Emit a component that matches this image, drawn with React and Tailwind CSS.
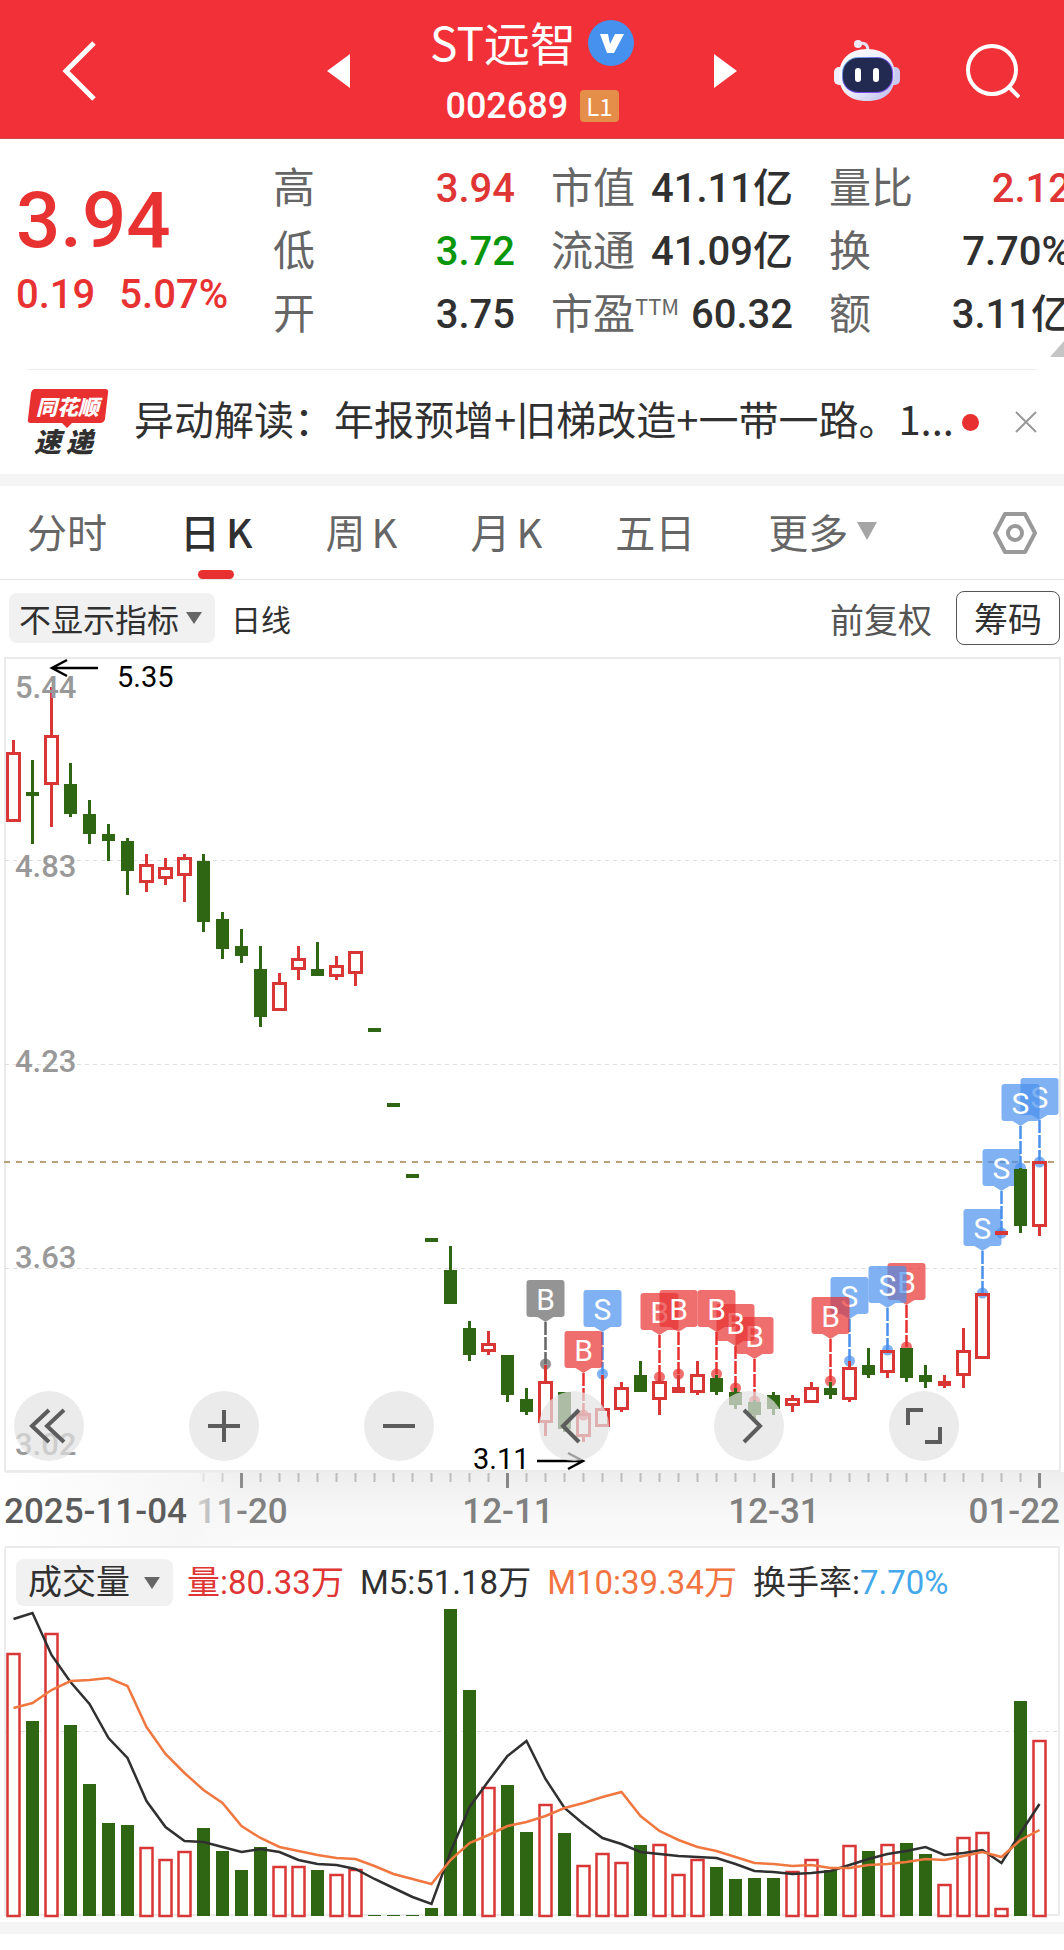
// src/pages/StockDetail.jsx
import { useState } from 'react';

const UP = '#d93636';
const DOWN = '#2f6614';

// candle spacing is shared by the price chart, the date axis and the volume chart
const STEP = 19;
const xAt = (i) => 13.5 + STEP * i;

// [direction, high, body top, body bottom, low] in canvas units
const CANDLES = [
  ['up', 740, 752, 822, 822], ['down', 760, 792, 796, 844], ['up', 687, 735, 785, 827],
  ['down', 763, 784, 814, 817], ['down', 800, 814, 834, 844], ['down', 824, 834, 841, 861],
  ['down', 838, 841, 871, 895], ['up', 854, 864, 883, 892], ['up', 858, 867, 879, 885],
  ['up', 854, 857, 876, 902], ['down', 854, 861, 922, 932], ['down', 912, 919, 949, 959],
  ['down', 929, 946, 956, 963], ['down', 946, 969, 1017, 1027], ['up', 973, 982, 1011, 1011],
  ['up', 946, 958, 970, 980], ['down', 942, 969, 976, 976], ['up', 956, 965, 977, 980],
  ['up', 951, 951, 974, 986], ['down', 1028, 1028, 1032, 1032], ['down', 1103, 1103, 1107, 1107],
  ['down', 1174, 1174, 1178, 1178], ['down', 1238, 1238, 1242, 1242], ['down', 1246, 1270, 1304, 1304],
  ['down', 1321, 1328, 1355, 1361], ['up', 1331, 1343, 1352, 1355], ['down', 1355, 1355, 1395, 1402],
  ['down', 1388, 1399, 1412, 1415], ['up', 1365, 1381, 1423, 1436], ['down', 1392, 1392, 1429, 1432],
  ['up', 1413, 1413, 1437, 1442], ['up', 1375, 1408, 1427, 1427], ['up', 1382, 1387, 1410, 1412],
  ['down', 1361, 1375, 1392, 1392], ['up', 1377, 1381, 1400, 1415], ['up', 1375, 1387, 1393, 1393],
  ['up', 1361, 1374, 1393, 1395], ['down', 1375, 1378, 1392, 1395], ['down', 1388, 1392, 1405, 1409],
  ['down', 1400, 1402, 1415, 1420], ['down', 1392, 1395, 1409, 1415], ['up', 1395, 1398, 1406, 1412],
  ['up', 1382, 1387, 1403, 1403], ['down', 1382, 1388, 1395, 1399], ['up', 1361, 1367, 1400, 1402],
  ['down', 1348, 1365, 1375, 1378], ['up', 1350, 1350, 1373, 1378], ['down', 1348, 1348, 1378, 1382],
  ['down', 1365, 1375, 1382, 1388], ['up', 1375, 1381, 1386, 1388], ['up', 1328, 1350, 1376, 1388],
  ['up', 1293, 1293, 1359, 1359], ['up', 1231, 1231, 1235, 1235], ['down', 1168, 1169, 1226, 1233],
  ['up', 1161, 1161, 1227, 1236],
];

// trades: [candle index, letter, colour, top of the flag]
const RED = '#e83030';
const BLUE = '#4a90ec';
const TRADES = [
  [54, 'S', BLUE, 1078], [53, 'S', BLUE, 1084], [52, 'S', BLUE, 1149], [51, 'S', BLUE, 1209],
  [47, 'B', RED, 1263], [46, 'S', BLUE, 1266], [44, 'S', BLUE, 1277], [43, 'B', RED, 1297],
  [39, 'B', RED, 1317], [38, 'B', RED, 1304], [37, 'B', RED, 1290], [34, 'B', RED, 1293],
  [35, 'B', RED, 1290], [31, 'S', BLUE, 1290], [30, 'B', RED, 1331], [28, 'B', '#666666', 1280],
];

const VOLUME_TOPS = [
  1653, 1721, 1633, 1725, 1784, 1823, 1825, 1847, 1859, 1851, 1828, 1851, 1870, 1847, 1866, 1866,
  1870, 1874, 1869, 1915, 1915, 1915, 1908, 1609, 1690, 1787, 1785, 1832, 1804, 1833, 1865, 1853,
  1862, 1845, 1844, 1874, 1859, 1867, 1879, 1878, 1878, 1871, 1859, 1870, 1845, 1851, 1844, 1843,
  1854, 1884, 1837, 1832, 1908, 1701, 1740,
];

const MA5 = [
  1619, 1613, 1655, 1682, 1704, 1738, 1758, 1801, 1827, 1841, 1842, 1847, 1852, 1849, 1852, 1860,
  1864, 1865, 1869, 1879, 1888, 1897, 1904, 1852, 1807, 1781, 1756, 1741, 1779, 1808, 1824, 1838,
  1844, 1852, 1854, 1856, 1857, 1858, 1864, 1871, 1872, 1874, 1873, 1871, 1865, 1859, 1854, 1851,
  1847, 1855, 1853, 1850, 1863, 1833, 1804,
];

const MA10 = [
  1708, 1703, 1690, 1681, 1680, 1678, 1686, 1727, 1754, 1773, 1790, 1803, 1826, 1838, 1847, 1851,
  1855, 1858, 1859, 1866, 1874, 1879, 1884, 1860, 1843, 1835, 1826, 1822, 1816, 1808, 1803, 1797,
  1792, 1816, 1831, 1840, 1847, 1851, 1857, 1863, 1864, 1866, 1865, 1868, 1868, 1865, 1864, 1862,
  1859, 1860, 1856, 1852, 1857, 1840, 1830,
];

const STATS = [
  [
    { label: '高', value: '3.94', color: 'text-[#e03535]' },
    { label: '低', value: '3.72', color: 'text-[#0a960a]' },
    { label: '开', value: '3.75', color: 'text-[#303030]' },
  ],
  [
    { label: '市值', value: '41.11亿', color: 'text-[#303030]' },
    { label: '流通', value: '41.09亿', color: 'text-[#303030]' },
    { label: '市盈', sup: 'TTM', value: '60.32', color: 'text-[#303030]' },
  ],
  [
    { label: '量比', value: '2.12', color: 'text-[#e03535]' },
    { label: '换', value: '7.70%', color: 'text-[#303030]' },
    { label: '额', value: '3.11亿', color: 'text-[#303030]' },
  ],
];

const TABS = [['分时'], ['日', 'K'], ['周', 'K'], ['月', 'K'], ['五日']];

const Header = () => (
  <header className="grid h-[139px] grid-cols-[1fr_auto_1fr] items-center border-b border-[#c9484c] bg-[#f23037] pt-1 text-white">
    <button aria-label="返回" className="ml-[60px] w-10">
      <svg viewBox="0 0 40 64" className="w-10" fill="none" stroke="currentColor" strokeWidth="5">
        <path d="M34 4 L6 32 L34 60" />
      </svg>
    </button>

    <div className="flex w-[410px] items-center justify-between">
      <button aria-label="上一只">
        <svg viewBox="0 0 24 36" className="w-6" fill="currentColor">
          <path d="M23 1 L0 18 L23 35 Z" />
        </svg>
      </button>
      <div className="flex flex-col items-center gap-5">
        <div className="flex items-center gap-3">
          <h1 className="pb-1 text-[46px] leading-[46px]">ST远智</h1>
          <svg viewBox="0 0 46 46" className="w-[46px]">
            <circle cx="23" cy="23" r="23" fill="#4690ee" />
            <path d="M12 14 H20 L22 24 L27 14 H36 L26 33 H19 Z" fill="#fff" />
          </svg>
        </div>
        <div className="flex items-center gap-3">
          <span className="font-['Roboto',sans-serif] text-[36px] font-medium leading-9">002689</span>
          <span className="rounded bg-[#e48e49] px-[6px] text-[24px] leading-8">L1</span>
        </div>
      </div>
      <button aria-label="下一只">
        <svg viewBox="0 0 24 36" className="w-6" fill="currentColor">
          <path d="M1 1 L24 18 L1 35 Z" />
        </svg>
      </button>
    </div>

    <div className="mr-11 flex items-center justify-end gap-[66px]">
      <button aria-label="智能助手">
        <svg viewBox="0 0 66 62" className="w-[66px]">
          <defs>
            <linearGradient id="shell" x1="0" y1="0" x2="1" y2="1">
              <stop offset="0" stopColor="#ffffff" />
              <stop offset="0.5" stopColor="#eeeefb" />
              <stop offset="1" stopColor="#b9b9ec" />
            </linearGradient>
            <linearGradient id="visor" x1="0" y1="0" x2="1" y2="1">
              <stop offset="0" stopColor="#7fd8e8" />
              <stop offset="0.5" stopColor="#6a3fe0" />
              <stop offset="1" stopColor="#8a5cf0" />
            </linearGradient>
          </defs>
          <path d="M24 4 C30 2 34 4 34 11" fill="none" stroke="#e6e0f4" strokeWidth="3" />
          <circle cx="24" cy="4" r="4" fill="#efeafa" />
          <rect x="0" y="27" width="12" height="18" rx="5" fill="#f1effb" />
          <rect x="54" y="27" width="12" height="18" rx="5" fill="#c9c8f0" />
          <path d="M33 9 C52 9 61 21 61 35 C61 51 52 61 33 61 C14 61 5 51 5 35 C5 21 14 9 33 9 Z" fill="url(#shell)" />
          <rect x="8" y="17" width="51" height="36" rx="16" fill="url(#visor)" />
          <rect x="9" y="18" width="49" height="34" rx="15" fill="#232a52" />
          <rect x="21" y="28" width="6" height="14" rx="3" fill="#fff" />
          <rect x="39" y="28" width="6" height="14" rx="3" fill="#fff" />
        </svg>
      </button>
      <button aria-label="搜索">
        <svg viewBox="0 0 54 56" className="w-[54px]" fill="none" stroke="currentColor" strokeWidth="4">
          <circle cx="26" cy="27" r="24" />
          <path d="M42 43 L53 54" />
        </svg>
      </button>
    </div>
  </header>
);

const Quote = () => (
  <section className="relative flex h-[230px] overflow-hidden pt-[18px]">
    <div className="w-[273px] shrink-0 pl-4 pt-5 font-['Roboto',sans-serif] font-medium text-[#e83232]">
      <p className="text-[78px] leading-[88px]">3.94</p>
      <p className="flex gap-6 text-[40px] leading-[60px]">
        <span>0.19</span>
        <span>5.07%</span>
      </p>
    </div>
    <div className="flex gap-9">
      {STATS.map((column, i) => (
        <dl key={i} className="w-[242px] shrink-0">
          {column.map((item) => (
            <div key={item.label} className="flex h-[63px] items-center justify-between whitespace-nowrap">
              <dt className="flex pb-2 text-[42px] leading-[55px] text-[#666]">
                {item.label}
                {item.sup && <sup className="top-0 text-[22px] leading-[44px]">{item.sup}</sup>}
              </dt>
              <dd className={`font-['Roboto','Noto_Sans_CJK_SC',sans-serif] text-[40px] font-medium leading-[63px] ${item.color}`}>
                {item.value}
              </dd>
            </div>
          ))}
        </dl>
      ))}
    </div>
    <svg viewBox="0 0 14 16" className="absolute bottom-3 right-0 w-[14px]">
      <path d="M14 0 V16 H0 Z" fill="#c4c4c4" />
    </svg>
  </section>
);

const News = () => (
  <section className="mx-[27px] flex h-[105px] items-center border-t border-[#ececec]">
    <svg viewBox="0 0 82 66" className="w-[82px] shrink-0">
      <path d="M8 0 H78 Q82 0 81 4 L78 30 Q77 34 73 34 H45 L40 39 L35 34 H4 Q0 34 1 30 L4 4 Q5 0 8 0 Z" fill="#e83030" />
      <text x="9" y="26" fontSize="21" fontWeight="900" fontStyle="italic" fill="#fff">同花顺</text>
      <text x="7" y="63" fontSize="27" fontWeight="900" fontStyle="italic" fill="#303030">速</text>
      <text x="39" y="63" fontSize="27" fontWeight="900" fontStyle="italic" fill="#303030">递</text>
    </svg>
    <a href="#news" className="ml-[25px] whitespace-nowrap pb-2 text-[40px] leading-[52px] text-[#303030]">
      异动解读：年报预增+旧梯改造+一带一路。1...
    </a>
    <span className="ml-2 h-[17px] w-[17px] shrink-0 rounded-full bg-[#e83030]" />
    <button aria-label="关闭" className="ml-auto">
      <svg viewBox="0 0 22 22" className="w-[22px]" fill="none" stroke="#999" strokeWidth="2">
        <path d="M1 1 L21 21 M21 1 L1 21" />
      </svg>
    </button>
  </section>
);

const PeriodTabs = () => {
  const [active, setActive] = useState(1);

  return (
    <nav className="flex h-[94px] items-center gap-[73px] border-b border-[#e4e4e4] px-[27px] text-[40px] text-[#666]">
      {TABS.map((parts, i) => (
        <button
          key={i}
          onClick={() => setActive(i)}
          className={`relative flex h-full items-center gap-[6px] whitespace-nowrap pb-1 ${active === i ? 'font-medium text-[#303030]' : ''}`}
        >
          {parts.map((part) => (
            <span key={part}>{part}</span>
          ))}
          {active === i && (
            <span className="absolute bottom-0 left-1/2 h-[9px] w-9 -translate-x-1/2 rounded-full bg-[#e83030]" />
          )}
        </button>
      ))}
      <button className="flex items-center gap-2 whitespace-nowrap pb-1">
        更多
        <svg viewBox="0 0 22 18" className="w-[22px]">
          <path d="M1 0 H21 L11 18 Z" fill="#a5a5a5" />
        </svg>
      </button>
      <button aria-label="设置" className="ml-auto">
        <svg viewBox="0 0 44 42" className="w-11" fill="none" stroke="#999" strokeWidth="4" strokeLinejoin="round">
          <path d="M12 2 H32 L42 21 L32 40 H12 L2 21 Z" />
          <circle cx="22" cy="21" r="7" />
        </svg>
      </button>
    </nav>
  );
};

const IndicatorSelect = ({ label, options, className }) => (
  <label className="relative flex items-center">
    <select
      aria-label={label}
      className={`appearance-none rounded-lg bg-[#f1f1f1] text-[#303030] ${className}`}
    >
      {options.map((option) => (
        <option key={option}>{option}</option>
      ))}
    </select>
    <svg viewBox="0 0 18 12" className="pointer-events-none absolute right-3 w-[18px]">
      <path d="M1 0 H17 L9 12 Z" fill="#666" />
    </svg>
  </label>
);

const ChartToolbar = () => (
  <div className="flex h-[76px] items-center pl-[9px] pr-1 text-[#303030]">
    <IndicatorSelect
      label="主图指标"
      options={['不显示指标', 'MA', 'BOLL']}
      className="h-[50px] w-[206px] pl-[10px] text-[32px]"
    />
    <span className="ml-4 text-[30px]">日线</span>
    <button className="ml-auto text-[34px] text-[#555]">前复权</button>
    <button className="ml-6 h-[54px] w-[104px] rounded-lg border border-[#555] text-[34px] leading-[50px]">筹码</button>
  </div>
);

const Candle = ({ index, data }) => {
  const [dir, high, top, bottom, low] = data;
  const x = xAt(index);
  const thin = bottom - top < 7;

  if (dir === 'down' || thin) {
    const color = dir === 'down' ? DOWN : UP;
    return (
      <g fill={color}>
        <rect x={x - 1.5} y={high} width="3" height={low - high} />
        <rect x={x - 6.5} y={top} width="13" height={bottom - top} />
      </g>
    );
  }

  return (
    <g stroke={UP} strokeWidth="3" fill="none">
      <path d={`M${x} ${high} V${top} M${x} ${bottom} V${low}`} />
      <rect x={x - 6} y={top + 1.5} width="12" height={bottom - top - 3} />
    </g>
  );
};

const TradeFlag = ({ index, letter, color, top }) => {
  const x = xAt(index);

  return (
    <g>
      <path d={`M${x} ${top + 42} V${top + 84}`} stroke={color} strokeWidth="2.5" strokeDasharray="13 2" />
      <circle cx={x} cy={top + 84} r="5.5" fill={color} opacity="0.7" />
      <path
        d={`M${x - 16} ${top} h32 q3 0 3 3 v31 q0 3 -3 3 h-8 l-8 5 l-8 -5 h-8 q-3 0 -3 -3 v-31 q0 -3 3 -3 Z`}
        fill={color}
        opacity="0.7"
      />
      <text x={x} y={top + 30} textAnchor="middle" fontSize="30" fill="#fff">{letter}</text>
    </g>
  );
};

const PriceChart = () => (
  <svg viewBox="0 656 1064 892" className="block w-full font-['Roboto',sans-serif]">
    <defs>
      <linearGradient id="axisShade" x1="0" y1="0" x2="0" y2="1">
        <stop offset="0" stopColor="#eeeeee" />
        <stop offset="0.6" stopColor="#f8f8f8" />
        <stop offset="1" stopColor="#fbfbfb" />
      </linearGradient>
      <linearGradient id="axisFade" x1="0" y1="0" x2="1" y2="0">
        <stop offset="0" stopColor="#fff" />
        <stop offset="0.75" stopColor="#f7f7f7" stopOpacity="0.9" />
        <stop offset="1" stopColor="#f7f7f7" stopOpacity="0" />
      </linearGradient>
    </defs>

    {/* date axis */}
    <rect x="5" y="1472" width="1059" height="75" fill="url(#axisShade)" />
    {CANDLES.map((_, i) => {
      if (i < 10) return null;
      const major = (i - 12) % 14 === 0;
      return (
        <rect
          key={i}
          x={xAt(i) - (major ? 1.5 : 1)}
          y="1473"
          width={major ? 3 : 2}
          height={major ? 15 : 9}
          fill={major ? '#888' : '#bdbdbd'}
        />
      );
    })}
    <g fontSize="35" fontWeight="500" fill="#808080" textAnchor="middle">
      <text x="242" y="1523">11-20</text>
      <text x="508" y="1523">12-11</text>
      <text x="774" y="1523">12-31</text>
      <text x="1060" y="1523" textAnchor="end">01-22</text>
    </g>
    <rect x="5" y="1473" width="240" height="74" fill="url(#axisFade)" />
    <text x="4" y="1523" fontSize="35" fontWeight="500" fill="#5c5c5c">2025-11-04</text>

    {/* frame and grid */}
    <g stroke="#ebebeb" strokeWidth="2" fill="none">
      <rect x="5" y="658" width="1055" height="813" />
      <path d="M5 1547 H1060" />
    </g>
    <g stroke="#dedede" strokeDasharray="4 4">
      <path d="M5 860.5 H1060" />
      <path d="M5 1064.5 H1060" />
      <path d="M5 1268.5 H1060" />
    </g>
    <path d="M4 1162 H1060" stroke="#b9a078" strokeWidth="2" strokeDasharray="6 6" />

    {TRADES.map(([index, letter, color, top]) => (
      <TradeFlag key={index} index={index} letter={letter} color={color} top={top} />
    ))}
    {CANDLES.map((data, i) => (
      <Candle key={i} index={i} data={data} />
    ))}

    <g fontSize="31" fontWeight="500" fill="#999">
      <text x="15" y="698">5.44</text>
      <text x="15" y="877">4.83</text>
      <text x="15" y="1072">4.23</text>
      <text x="15" y="1268">3.63</text>
      <text x="15" y="1455">3.02</text>
    </g>
    <g fontSize="29" fill="#000">
      <text x="117" y="687">5.35</text>
      <text x="473" y="1469">3.11</text>
    </g>
    <g stroke="#000" strokeWidth="2.5" fill="none">
      <path d="M98 668 H52 M67 660 L52 668 L67 676" />
      <path d="M537 1461 H583 M568 1453 L583 1461 L568 1469" />
    </g>
  </svg>
);

const CHART_BUTTONS = [
  { label: '最早', d: 'M35 19 L18 35 L35 51 M50 19 L33 35 L50 51' },
  { label: '放大', d: 'M19 35 H51 M35 19 V51' },
  { label: '缩小', d: 'M19 35 H51' },
  { label: '左移', d: 'M40 19 L24 35 L40 51' },
  { label: '右移', d: 'M30 19 L46 35 L30 51' },
  { label: '全屏', d: 'M19 34 V19 H34 M36 51 H51 V36' },
];

const ChartControls = () => (
  <div className="absolute bottom-[87px] left-[14px] flex gap-[105px]">
    {CHART_BUTTONS.map((button) => (
      <button key={button.label} aria-label={button.label} className="h-[70px] w-[70px] rounded-full bg-[#e3e3e3]/70">
        <svg viewBox="0 0 70 70" fill="none" stroke="#5c5c5c" strokeWidth="4">
          <path d={button.d} />
        </svg>
      </button>
    ))}
  </div>
);

const toPoints = (line) => line.map((y, i) => `${xAt(i)},${y}`).join(' ');

const VolumeChart = () => (
  <section>
    <div className="mx-1 flex h-[59px] items-center whitespace-nowrap border-x-2 border-[#ebebeb] pl-[10px] pt-[10px] font-['Roboto','Noto_Sans_CJK_SC',sans-serif] text-[33px] leading-[48px] text-[#303030]">
      <IndicatorSelect
        label="副图指标"
        options={['成交量', 'MACD', 'KDJ']}
        className="h-[47px] w-[157px] pl-3 text-[34px] leading-[47px]"
      />
      <span className="ml-[14px] text-[#e03535]">量:80.33万</span>
      <span className="ml-4">M5:51.18万</span>
      <span className="ml-4 text-[#f27440]">M10:39.34万</span>
      <span className="ml-4">换手率:</span>
      <span className="text-[#44a8ea]">7.70%</span>
    </div>
    <svg viewBox="0 1607 1064 315" className="block w-full">
      <path d="M5 1607 V1915 H1059 V1607" fill="none" stroke="#ebebeb" strokeWidth="2" />
      <path d="M5 1731.5 H1060" stroke="#dedede" strokeDasharray="4 4" />
      {VOLUME_TOPS.map((top, i) => {
        const x = xAt(i);
        return CANDLES[i][0] === 'up' ? (
          <rect key={i} x={x - 6} y={top + 1} width="12" height={1915 - top} fill="#fff" stroke={UP} strokeWidth="2.5" />
        ) : (
          <rect key={i} x={x - 6.5} y={top} width="13" height={1916 - top} fill={DOWN} />
        );
      })}
      <polyline points={toPoints(MA5)} fill="none" stroke="#303030" strokeWidth="2.5" />
      <polyline points={toPoints(MA10)} fill="none" stroke="#f07840" strokeWidth="2.5" />
    </svg>
  </section>
);

const App = () => (
  <main className="min-h-screen overflow-hidden bg-white font-['Noto_Sans_CJK_SC',sans-serif]">
    <Header />
    <Quote />
    <News />
    <div className="h-3 bg-[#f4f4f4]" />
    <PeriodTabs />
    <ChartToolbar />
    <div className="relative">
      <PriceChart />
      <ChartControls />
    </div>
    <VolumeChart />
    <div className="h-3 bg-[#f4f4f4]" />
  </main>
);

export default App;
